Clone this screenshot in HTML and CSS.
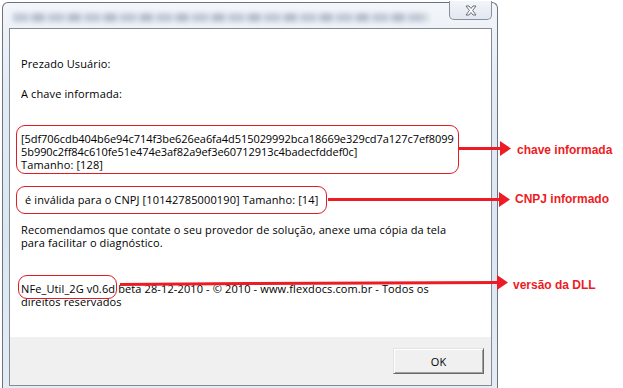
FILE: index.html
```html
<!DOCTYPE html>
<html>
  <head>
    <title>Erro de chave</title>
    <link rel="stylesheet" href="styles.css">
  </head>
  <body>
    <div class="window">
      <div class="titlebar">
        <div class="title-blur"></div>
        <div class="close-btn">
          <svg width="14" height="11" viewBox="0 0 14 11">
            <path d="M2 1 L5 1 L7 3.5 L9 1 L12 1 L8.6 5.5 L12 10 L9 10 L7 7.5 L5 10 L2 10 L5.4 5.5 Z" fill="#fff" stroke="#6b6f75" stroke-width="1"/>
          </svg>
        </div>
      </div>
      <div class="dialog">
        <div class="dialog-body">
          <p class="msg msg-greet">Prezado Usuário:</p>
          <p class="msg msg-key">A chave informada:</p>
          <div class="mark mark-key">
            <span class="hex">[5df706cdb404b6e94c714f3be626ea6fa4d515029992bca18669e329cd7a127c7ef8099<br>
            5b990c2ff84c610fe51e474e3af82a9ef3e60712913c4badecfddef0c]</span><br>
            Tamanho: [128]
          </div>
          <div class="mark mark-cnpj">é inválida para o CNPJ [10142785000190] Tamanho: [14]</div>
          <p class="msg msg-advice">Recomendamos que contate o seu provedor de solução, anexe uma cópia da tela<br>para facilitar o diagnóstico.</p>
          <p class="msg msg-version"><span class="mark-dll">NFe_Util_2G v0.6d</span> beta 28-12-2010 - © 2010 - www.flexdocs.com.br - Todos os<br>direitos reservados</p>
        </div>
        <div class="dialog-footer">
          <button class="ok-btn">OK</button>
        </div>
      </div>
    </div>

    <svg class="notes" width="623" height="388" viewBox="0 0 623 388">
      <g stroke="#ed1c24" stroke-width="3" fill="none">
        <line x1="459" y1="148.5" x2="501" y2="148.5"/>
        <line x1="328" y1="199.5" x2="500" y2="199.5"/>
        <polyline points="120,284.5 247,283.5 498,282.5"/>
      </g>
      <g fill="#ed1c24">
        <polygon points="500,141 511,148.5 500,156"/>
        <polygon points="499,192 510,199.5 499,207"/>
        <polygon points="497,275 508,282.5 497,290"/>
      </g>
      <g class="note-text">
        <text x="517" y="154">chave informada</text>
        <text x="515" y="203">CNPJ informado</text>
        <text x="513" y="289">versão da DLL</text>
      </g>
    </svg>
  </body>
</html>
```

FILE: styles.css
```css
body {
  margin: 0;
  background-color: #fff;
  font-family: "Open Sans", "Noto Sans", sans-serif;
  font-size: 11px;
  letter-spacing: 0.12px;
  color: #000;
}

.window {
  box-sizing: border-box;
  width: 496px;
  height: 390px;
  margin: 2px 0 0 2px;
  padding: 0 5px 0 6px;
  border: 1px solid #6c737c;
  border-bottom: none;
  border-radius: 6px 6px 0 0;
  background: linear-gradient(180deg, #f3f6fa 0%, #e3ebf5 20%, #dbe6f2 60%, #e4ecf6 100%);
}

.titlebar {
  height: 25px;
  display: flex;
  align-items: flex-start;
}

.title-blur {
  flex: 1;
  height: 9px;
  margin: 10px 20px 0 4px;
  background: repeating-linear-gradient(90deg, #b7c0cd 0 14px, #cfd6e0 14px 20px, #a8b2c1 20px 31px, #d5dbe4 31px 36px);
  filter: blur(2.5px);
  opacity: 0.8;
}

.close-btn {
  width: 43px;
  height: 19px;
  margin-top: -2px;
  box-sizing: border-box;
  border: 1px solid #8b9098;
  border-top: none;
  border-radius: 0 0 5px 5px;
  background: linear-gradient(180deg, #f2f5f9, #e2e8f0);
  display: flex;
  align-items: center;
  justify-content: center;
}

.dialog {
  box-sizing: border-box;
  height: 358px;
  border: 1px solid #858b93;
  background-color: #fff;
  display: flex;
  flex-direction: column;
}

.dialog-body {
  flex: 1;
  padding: 0 11px;
}

.msg {
  margin: 0;
  line-height: 13px;
}

.msg-greet {
  margin-top: 28px;
}

.msg-key {
  margin-top: 17px;
}

.mark {
  border: 1px solid #e31b23;
  line-height: 13px;
}

.hex {
  letter-spacing: -0.06px;
}

.mark-key {
  margin: 25px 21px 0 -5px;
  padding: 6px 4px 2px 4px;
  border-radius: 9px;
}

.mark-cnpj {
  display: inline-block;
  margin: 12px 0 0 -5px;
  padding: 6px 0 7px 8px;
  width: 301px;
  border-radius: 9px;
}

.msg-advice {
  margin-top: 9px;
}

.msg-version {
  margin-top: 33px;
}

.mark-dll {
  position: relative;
}

.mark-dll::after {
  content: '';
  position: absolute;
  left: -3px;
  right: -2px;
  top: -6px;
  bottom: -3px;
  border: 1px solid #e31b23;
  border-radius: 9px;
}

.dialog-footer {
  height: 48px;
  box-sizing: border-box;
  padding: 11px 7px 0 0;
  background-color: #f0f0f0;
  display: flex;
  justify-content: flex-end;
  align-items: flex-start;
}

.ok-btn {
  width: 91px;
  height: 26px;
  padding: 0;
  font-family: "Open Sans", "Noto Sans", sans-serif;
  font-size: 11px;
  color: #000;
  background-color: #f0f0f0;
  border: 1px solid;
  border-color: #e3e3e3 #696969 #696969 #e3e3e3;
  box-shadow: inset 1px 1px #fff, inset -1px -1px #a0a0a0;
}

.notes {
  position: absolute;
  top: 0;
  left: 0;
  pointer-events: none;
}

.note-text {
  font-family: "Liberation Sans", Arial, sans-serif;
  font-size: 12px;
  font-weight: bold;
  letter-spacing: 0;
  fill: #ed1c24;
}
```
